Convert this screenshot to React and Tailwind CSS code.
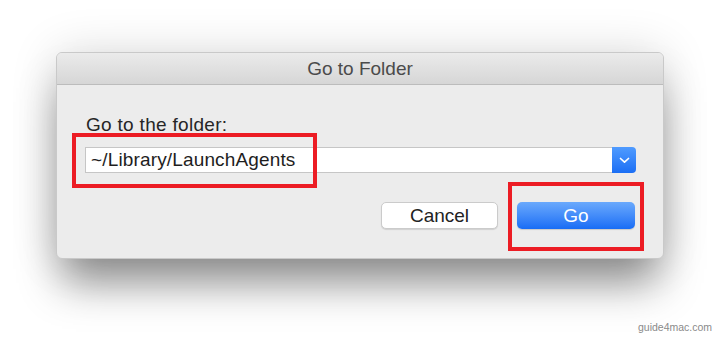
import React from 'react';

// Down chevron for the popup button
const Chevron = () => (
    <svg width="11" height="7" viewBox="0 0 11 7" fill="none">
        <path d="M1.5 1.5 L5.5 5.2 L9.5 1.5" stroke="white" strokeWidth="1.7" strokeLinecap="round" strokeLinejoin="round" />
    </svg>
);

const App = () => {
    return (
        <div className="relative w-[720px] h-[339px] bg-white overflow-hidden font-['Liberation_Sans',Arial,sans-serif]">
            <div className="pt-[52px] pl-[56px]">
                {/* Dialog */}
                <div className="w-[608px] h-[207px] flex flex-col rounded-[6px] border border-[#c9c9c9] bg-[#ececec] overflow-hidden shadow-[0_30px_40px_-6px_rgba(0,0,0,0.42),0_0_48px_rgba(0,0,0,0.14)]">
                    {/* Title bar */}
                    <div className="h-[32px] shrink-0 flex items-center justify-center bg-gradient-to-b from-[#ebebeb] to-[#d6d6d6] border-b border-[#bcbcbc]">
                        <span className="text-[19px] leading-[22px] text-[#4b4b4b]">Go to Folder</span>
                    </div>

                    {/* Body */}
                    <div className="flex flex-col pt-[29px] pl-[28px] pr-[27px]">
                        <label className="pl-[1px] text-[19px] leading-[22px] tracking-[0.3px] text-[#262626]">Go to the folder:</label>

                        <div className="mt-[11px] flex h-[26px]">
                            <div className="flex-1 flex items-center pl-[5px] bg-white border border-[#c6c6c6] border-r-0">
                                <span className="text-[19px] leading-[22px] tracking-[0.15px] text-[#1e1e1e]">~/Library/LaunchAgents</span>
                            </div>
                            <div className="w-[24px] flex items-center justify-center rounded-r-[4px] bg-gradient-to-b from-[#4f9bff] to-[#1b6ef4]">
                                <Chevron />
                            </div>
                        </div>

                        <div className="mt-[29px] flex justify-end gap-[19px] pr-[1px]">
                            <button className="w-[117px] h-[27px] flex items-center justify-center rounded-[5px] bg-white border border-[#cbcbcb] shadow-[0_1px_1px_rgba(0,0,0,0.12)] text-[19px] leading-[22px] text-[#222222]">
                                Cancel
                            </button>
                            <button className="w-[118px] h-[27px] flex items-center justify-center rounded-[5px] bg-gradient-to-b from-[#6aa9fc] to-[#176cf5] shadow-[0_1px_1px_rgba(0,0,0,0.15)] text-[19px] leading-[22px] text-white">
                                Go
                            </button>
                        </div>
                    </div>
                </div>
            </div>

            {/* Red highlight boxes */}
            <div className="absolute left-[72px] top-[133px] w-[245px] h-[55px] border-[4px] border-[#ec1c24]" />
            <div className="absolute left-[508px] top-[182px] w-[136px] h-[69px] border-[4px] border-[#ec1c24]" />

            {/* Watermark */}
            <span className="absolute left-[638px] top-[320px] text-[10.5px] leading-[14px] text-[#8a8a8a]">guide4mac.com</span>
        </div>
    );
};

export default App;
